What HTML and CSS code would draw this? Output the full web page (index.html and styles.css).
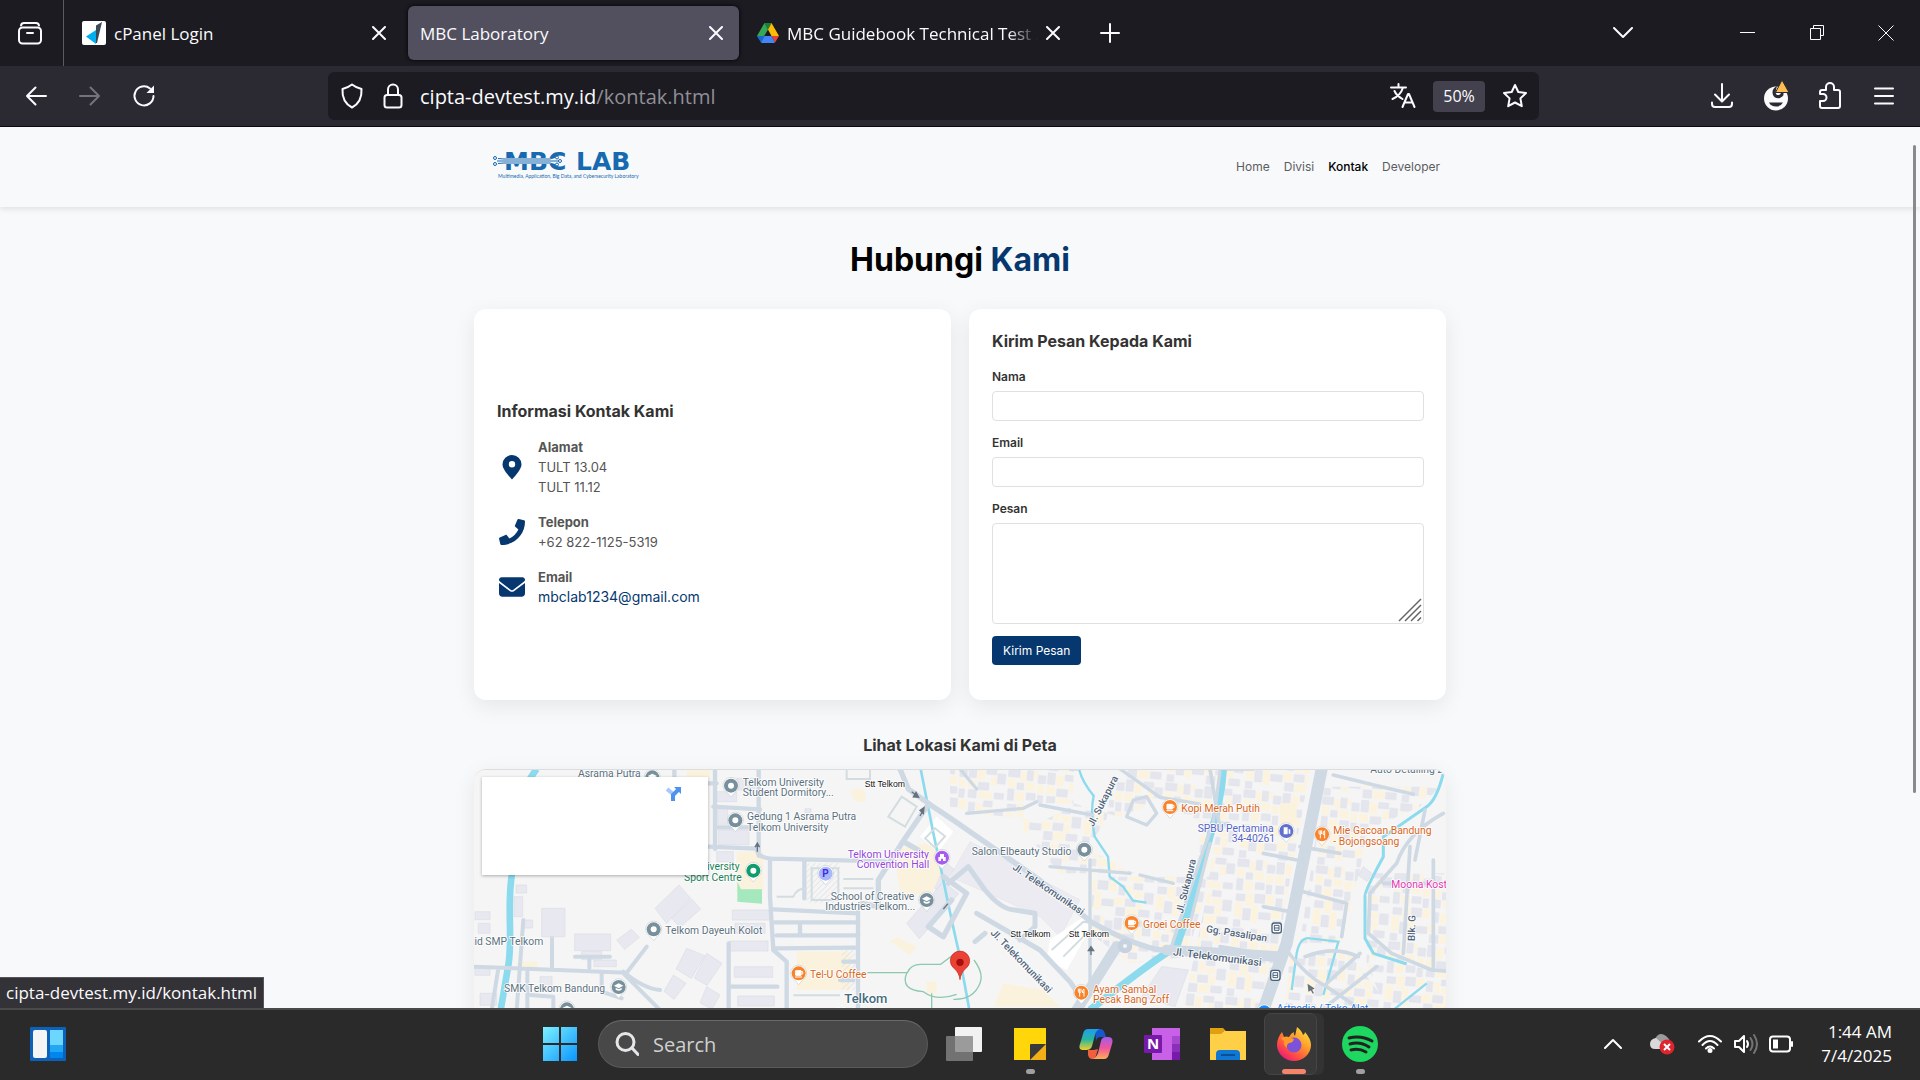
FILE: index.html
```html
<!DOCTYPE html>
<html lang="id">
<head>
<meta charset="utf-8">
<meta name="viewport" content="width=device-width, initial-scale=1">
<title>MBC Laboratory</title>
<link rel="stylesheet" href="styles.css">
</head>
<body>
<div class="desktop">

  <header class="tabbar">
    <button class="icon-btn tab-overview" aria-label="Recent browsing"><svg width="26" height="26" viewBox="0 0 26 26" class="line"><path d="M4 5.500q.5-2.500 3-2.500h12q2.500 0 3 2.500"/><rect x="2" y="7.500" width="22" height="16" rx="3.500"/><path d="M10 13h6"/></svg></button>
    <div class="tab">
      <svg width="24" height="24" viewBox="0 0 24 24"><rect width="24" height="24" rx="2" fill="#fff"/><path d="M4 15.500 14 9v14z" fill="#00aeef"/><path d="M14 4.500 20 1l-5 21h-1z" fill="#3b4a56"/></svg>
      <span class="tab-title">cPanel Login</span>
      <button class="icon-btn" aria-label="Close tab"><svg width="14" height="14" viewBox="0 0 14 14" class="line"><path d="m1 1 12 12M13 1 1 13"/></svg></button>
    </div>
    <div class="tab active">
      <span class="tab-title">MBC Laboratory</span>
      <button class="icon-btn" aria-label="Close tab"><svg width="14" height="14" viewBox="0 0 14 14" class="line"><path d="m1 1 12 12M13 1 1 13"/></svg></button>
    </div>
    <div class="tab">
      <svg width="22" height="20" viewBox="0 0 22 20"><path d="M7.500 0h7L11 6.500z" fill="#188038"/><path d="M7.500 0 11 6.500 4 18.500 0 13z" fill="#34a853"/><path d="M14.500 0 22 13h-7.500L11 6.500z" fill="#fbbc04"/><path d="M22 13h-7.500l3.500 6.500z" fill="#ea4335"/><path d="M0 13h7.500L4 19.500z" fill="#1967d2"/><path d="M7.500 13h7l3.500 6.500q-.5.500-1.500.500h-11q-1 0-1.500-.5z" fill="#4285f4"/></svg>
      <span class="tab-title faded">MBC Guidebook Technical Test 2025</span>
      <button class="icon-btn" aria-label="Close tab"><svg width="14" height="14" viewBox="0 0 14 14" class="line"><path d="m1 1 12 12M13 1 1 13"/></svg></button>
    </div>
    <button class="icon-btn new-tab" aria-label="New tab"><svg width="20" height="20" viewBox="0 0 20 20" class="line"><path d="M10 1v18M1 10h18"/></svg></button>
    <div class="window-controls">
      <button class="icon-btn list-tabs" aria-label="List all tabs"><svg width="20" height="12" viewBox="0 0 20 12" class="line"><path d="m1 1 9 9 9-9"/></svg></button>
      <button class="icon-btn" aria-label="Minimize"><svg width="16" height="16" viewBox="0 0 16 16" class="line thin"><path d="M0 7.500h15"/></svg></button>
      <button class="icon-btn" aria-label="Restore"><svg width="16" height="16" viewBox="0 0 16 16" class="line thin"><path d="M1.500 3.500h10v11h-10zM4.500 3.500v-3h10v10h-3"/></svg></button>
      <button class="icon-btn" aria-label="Close"><svg width="16" height="16" viewBox="0 0 16 16" class="line thin"><path d="m.5.500 15 15M15.500.5l-15 15"/></svg></button>
    </div>
  </header>

  <nav class="toolbar" aria-label="Browser">
    <div class="tools">
      <button class="icon-btn" aria-label="Back"><svg width="22" height="20" viewBox="0 0 22 20" class="line"><path d="M21 10H2M10.500 1.500 2 10l8.500 8.500"/></svg></button>
      <button class="icon-btn dim" aria-label="Forward"><svg width="22" height="20" viewBox="0 0 22 20" class="line"><path d="M1 10h19M11.500 1.500 20 10l-8.500 8.500"/></svg></button>
      <button class="icon-btn" aria-label="Reload"><svg width="24" height="24" viewBox="0 0 24 24" class="line"><path d="M21.500 12a9.500 9.500 0 1 1-3.500-7.500"/><path d="M22 1.500V9h-7.500z" fill="currentColor" stroke="none"/></svg></button>
    </div>
    <div class="urlbar">
      <svg width="24" height="26" viewBox="0 0 24 26" class="line"><path d="M12 1.500c3 2.500 6 3.500 9.500 4.500.5 8-2 14.500-9.500 18.500C4.500 20.500 2 14 2.500 6 6 5 9 4 12 1.500z"/></svg>
      <svg width="20" height="26" viewBox="0 0 20 26" class="line"><rect x="1.500" y="12" width="17" height="12.500" rx="2.500"/><path d="M5 12V6.500a5 5 0 0 1 10 0V12"/></svg>
      <span class="url">cipta-devtest.my.id<span class="url-path">/kontak.html</span></span>
      <button class="icon-btn" aria-label="Translate"><svg width="26" height="26" viewBox="0 0 26 26" class="line"><path d="M1 4.500h15M8.500 1v3.500M13 4.500C11.500 9.500 7 14 2.500 16M4.500 8c1.500 3.500 4.500 6 8 8"/><path d="m12.500 24 5.500-13h1l5.500 13M14.500 19.500h8"/></svg></button>
      <button class="zoom-level">50%</button>
      <button class="icon-btn" aria-label="Bookmark"><svg width="26" height="26" viewBox="0 0 26 26" class="line"><path d="m13 2 3.300 7 7.700 1-5.600 5.400 1.400 7.800L13 19.500l-6.800 3.700 1.400-7.800L2 10l7.700-1z"/></svg></button>
    </div>
    <div class="tools right">
      <button class="icon-btn" aria-label="Downloads"><svg width="24" height="26" viewBox="0 0 24 26" class="line"><path d="M12 1v17M5 11.500l7 7 7-7M2 19.500v1.500q0 3 3 3h14q3 0 3-3v-1.500"/></svg></button>
      <button class="icon-btn" aria-label="Account"><svg width="26" height="32" viewBox="0 0 26 32"><circle cx="13" cy="18.500" r="12" fill="#fbfbfe"/><path d="M14 6q-6 3-4 9 2 4 7 3 5-2 3-6h-2q0 3-3 3t-2-5z" fill="#2b2a33"/><path d="M6 22.500h14q-2 4-7 4t-7-4z" fill="#2b2a33"/><path d="m19 0 7 12.500H12.500z" fill="#ffbd4f" stroke="#2b2a33"/></svg></button>
      <button class="icon-btn" aria-label="Extensions"><svg width="24" height="28" viewBox="0 0 24 28" class="line"><path d="M8 8V5a4 4 0 0 1 8 0v3h4q2 0 2 2v14q0 2-2 2H4q-2 0-2-2v-5h3a3.500 3.500 0 0 0 0-7H2v-2q0-2 2-2z"/></svg></button>
      <button class="icon-btn" aria-label="Menu"><svg width="20" height="20" viewBox="0 0 20 20" class="line"><path d="M1 2.500h18M1 10h18M1 17.500h18"/></svg></button>
    </div>
  </nav>

  <div class="viewport">
    <div class="site-header">
      <div class="container nav">
        <svg class="logo" width="150" height="44" viewBox="0 0 150 44" role="img" aria-label="MBC LAB">
          <text x="12" y="26" class="logo-word">MBC</text>
          <text x="84" y="26" class="logo-word">LAB</text>
          <path d="M6 17h60" stroke="#f8f9fb" stroke-width="6"/>
          <path d="M5 17h62M6 14.500l6 .5h46l5-1.500M6 19.500l6-.5h46l5 1.500" stroke="#1769b0" fill="none"/>
          <g fill="#f8f9fb" stroke="#1769b0"><circle cx="3" cy="14" r="1.500"/><circle cx="3" cy="20" r="1.500"/><circle cx="65" cy="13.500" r="1.500"/><circle cx="68" cy="17" r="1.500"/><circle cx="65" cy="20.500" r="1.500"/></g>
          <text x="6" y="34" class="logo-tag">Multimedia, Application, Big Data, and Cybersecurity Laboratory</text>
        </svg>
        <div class="links">
          <a href="#">Home</a><a href="#">Divisi</a><a href="#" class="current">Kontak</a><a href="#">Developer</a>
        </div>
      </div>
    </div>

    <main class="container">
      <h1>Hubungi <span>Kami</span></h1>
      <div class="cards">
        <section class="card info">
          <h2>Informasi Kontak Kami</h2>
          <div class="item">
            <svg width="26" height="26" viewBox="0 0 26 26"><path fill-rule="evenodd" d="M13 1a9.500 9.500 0 0 0-9.500 9.500C3.500 15 9 21 13 25.500 17 21 22.500 15 22.500 10.500A9.500 9.500 0 0 0 13 1zm0 6a3.200 3.200 0 1 1 0 6.400A3.200 3.200 0 0 1 13 7z"/></svg>
            <div><strong>Alamat</strong><p>TULT 13.04</p><p>TULT 11.12</p></div>
          </div>
          <div class="item">
            <svg width="26" height="26" viewBox="0 0 512 512"><path d="M493 25 389 1c-11-3-23 3-27 14l-48 112c-4 10-1 21 7 28l61 50a371 371 0 0 1-177 177l-50-61c-7-8-18-11-28-7L15 362c-11 5-17 16-14 28l24 104c3 11 12 18 24 18 256 0 463-207 463-463 0-12-8-22-19-24z"/></svg>
            <div><strong>Telepon</strong><p>+62 822-1125-5319</p></div>
          </div>
          <div class="item">
            <svg width="26" height="26" viewBox="0 0 512 512"><path d="M48 64a48 48 0 0 0-29 86l218 164c11 8 27 8 38 0l218-164a48 48 0 0 0-29-86zM0 176v208c0 35 29 64 64 64h384c35 0 64-29 64-64V176L294 339c-22 17-54 17-76 0z"/></svg>
            <div><strong>Email</strong><p><a href="mailto:mbclab1234@gmail.com">mbclab1234@gmail.com</a></p></div>
          </div>
        </section>
        <form class="card">
          <h2>Kirim Pesan Kepada Kami</h2>
          <label for="nama">Nama</label>
          <input id="nama" type="text">
          <label for="email">Email</label>
          <input id="email" type="email">
          <label for="pesan">Pesan</label>
          <div class="area">
            <textarea id="pesan"></textarea>
            <svg class="grip" width="24" height="24" viewBox="0 0 24 24"><path d="M1 23 23 1M7 23 23 7M13 23 23 13M19.500 23l3.500-3.500"/></svg>
          </div>
          <button type="button" class="send">Kirim Pesan</button>
        </form>
      </div>
      <h2 class="map-title">Lihat Lokasi Kami di Peta</h2>
      <div class="map">
        <svg viewBox="42 150 2916 1014" preserveAspectRatio="xMidYMin slice" role="img" aria-label="Peta lokasi">
          <defs>
            <pattern id="dense" width="236" height="208" patternUnits="userSpaceOnUse" patternTransform="rotate(5)">
              <g fill="#e4e5ed" stroke="#d8dae4"><path d="M2 3h34v22H2zM58 2h18v30H58zM92 14h22v24H92zM30 42h20v20H30zM4 62h18v34H4zM60 70h27v20H60zM94 74h16v26H94zM120 4h22v34h-22zM172 6h30v18h-30zM206 20h24v30h-24zM150 50h32v22h-32zM122 74h24v24h-24zM200 78h28v18h-28zM6 108h26v20H6zM62 104h30v26H62zM30 150h22v34H30zM78 158h34v20H78zM4 186h20v20H4zM126 112h18v30h-18zM170 104h26v18h-26zM204 130h26v32h-26zM148 152h30v22h-30zM122 180h26v24h-26zM190 182h32v20h-32z"/></g>
              <g fill="#fcf3df"><path d="M39 7h16v30H39zM79 2h10v22H79zM3 31h22v26H3zM56 38h28v24H56zM28 68h26v28H28zM91 44h20v24H91zM146 8h22v34h-22zM186 30h17v26h-17zM118 44h26v24h-26zM152 78h42v20h-42zM36 104h22v38H36zM96 104h22v30H96zM4 134h22v44H4zM56 138h18v54H56zM150 112h16v34h-16zM172 128h26v20h-26zM114 150h28v24h-28zM182 154h18v24h-18zM152 180h34v24h-34z"/></g>
            </pattern>
            <pattern id="hatch" width="12" height="12" patternUnits="userSpaceOnUse" patternTransform="rotate(45)"><path d="M0 0v12" stroke="#d8d9de" stroke-width="3"/></pattern>
            <g id="pin"><path d="M0 34-12 20a24 24 0 1 1 24 0z" fill="#fff" stroke="#c9cdd2" stroke-width="2"/><circle r="21"/></g>
            <g id="cup" fill="none" stroke="#fff" stroke-width="3"><path d="M-9-8H7V6H-9z" fill="#fff"/><path d="M7-5h5v7H7M-11 11H10"/></g>
            <g id="fork" fill="none" stroke="#fff" stroke-width="3"><path d="M-9-12v8q0 4 4 4t4-4v-8M-5-12V12M8 12V-11q-5 2-5 11h5"/></g>
            <g id="cap" fill="#fff"><path d="M-14-4 0-11 14-4 0 4zM-9 2v6Q0 14 9 8V2L0 7z"/></g>
            <g id="bus"><rect x="-14" y="-15" width="28" height="30" rx="7" fill="#fff" stroke="#48617a" stroke-width="4"/><path d="M-7-8H7V7H-7zM-7 0H7" fill="none" stroke="#48617a" stroke-width="3"/></g>
          </defs>
          <rect x="42" y="147" width="2916" height="1020" fill="#f5f5f5"/>

          <g fill="url(#dense)">
            <path d="M1470 147h370v110l-90 45-280-30zM1840 250h-150v80l110 130h330l-20-130zM1960 147h330l-50 320-280-40-80-40 60-90zM1900 470h350l-70 240-170 20-120-90zM2300 147h250l-130 720h-250l60-290zM2590 200h350l-60 60-160 70-20 120-60 220h-120zM2720 460h240v460l-190-70-50-120zM2490 700h180l110 150 100 80v100h-420z"/>
          </g>
          <path d="M1965 300l130-60 130 70-20 160-150 0-80-30z" fill="#f5f5f5"/>
          <g fill="#e8e8f0" stroke="#dcdce6" stroke-width="2">
            <path d="m585 565 72-70 35 40-72 75zM635 595l60-58 27 30-62 55zM245 565h70v85h-70zM45 575h45v24H45zM55 610h35v30H55zM168 495h32v24h-32zM162 530h26v60h-26zM187 600h31v24h-31zM344 642h108v50H344zM402 720h67v20h-67zM365 694h60v25h-60zM470 660l44-32 24 24-44 36zM770 215h60v30h-60zM775 330h92v44h-92zM770 395h50v30h-50zM817 570h112v30H817zM825 610h90v30h-90zM808 663h116v30H808zM823 740h115v32H823zM833 828h110v30H833zM773 265h30v48h-30zM830 175h54v35h-54zM680 685l54 22-40 68-46-28zM740 700l46 30-45 66-38-22zM640 765l38 25-36 48-30-24zM740 800l40 25-24 42-36-18zM45 740h45v26H45zM60 820h50v36H60zM240 770h36v42h-36z"/>
            <path d="m1340 610 110-125 46 36-118 135zM1400 480l55-55 28 24-54 60z"/>
            <path d="m1470 470 60-105 330 175-60 110-60-60-110-50z" opacity=".7"/>
            <path d="m2045 830 60-90 80 10-40 110zM1035 266h18v12h-18zM2530 880h60v60h-60zM2710 440l25 20-14 24-26-18z"/>
          </g>
          <g fill="#fbf2de"><path d="M830 395h80v120h-80zM1010 695h160v115h-160zM1300 390l100-20 60 50-50 110-90-15zM1310 650l60 30-20 25-60-40zM1630 790l120 20 50 50H1600zM1170 215q24-20 46 0v30h-30zM680 147h70v30h-70zM185 725h48v18h-48zM1400 785h30v35h-30zM2460 250h50v60h-50z"/></g>
          <path d="M832 485v60l74 6v-43h-63z" fill="#a5e8bd"/>
          <path d="M1040 430h100v120h-100zM1145 690h40v120h-40z" fill="url(#hatch)"/>
          <g fill="#fff"><path d="m1380 350 50-60 50 45-45 60zM1770 660l100-70 30 20-80 140-60-30z"/></g>

          <g class="water">
            <path d="M230 147C150 250 168 330 156 460C140 560 158 640 146 730L122 870" stroke-width="20"/>
            <path d="M1382 147Q1400 240 1420 340L1450 480Q1470 580 1495 690L1530 880" stroke-width="8"/>
            <path d="M1857 147q10 40 44 80Q1890 280 1904 350l40 60 5 60 40 30 30 42 40 6" stroke-width="7"/>
            <path d="M2290 147Q2284 240 2250 350L2190 560 2150 680Q2080 720 1890 870" stroke-width="22"/>
            <path d="M2950 160q-20 80-50 100l-130 90 0 60q-60 110-55 120l0 125 25 45 100 32" stroke-width="9"/>
            <path d="M2495 810l15-110q10-50 40-45l85 10-45 160M2900 790l-100 80" stroke-width="7"/>
          </g>

          <g class="road">
            <path d="M42 740 500 758 560 680M490 755q60 50 110 55M490 760 600 870M115 745l-20 125M190 600l-20 270M276 655v88M388 715v30M425 755v60l60 20M202 755v110M345 710h105M210 825l70 5 0 40" stroke-width="12"/>
            <path d="M643 147v110M765 147v240M896 147v260M740 190h30M760 260l140 8M765 322h130M745 380l145 6q0 26 45 30l340 8M930 420v110l10 160 40 35v145M940 568l252 12M945 607h250M950 646h245M945 685l240-2M1020 607v40M1194 575v295M1033 425v110M806 670v200M812 800h140M1150 725h40M1140 780h40" stroke-width="13"/>
            <path d="M1320 147l25 60 70 50 60 40 260 180 160 130q110 60 190 80l75 12 40 0M1400 260l-75 110-70 110v80l-50-10M1330 365l45 25M1450 470l70 50-70 130-45-30 70-80" stroke-width="16"/>
            <path d="m1465 490 60-50 50 70q50 60 90 60l60 10 0 40-45 40M1550 580l190 110 90 95 30 45M1545 665l30-25" stroke-width="15"/>
            <path d="M1890 420v370M1830 147l20 0M1980 147l50 35 70 50 120 20M2020 240l-20 50 60 25 30-35-30-50zM1520 280l170-15 40-20M1740 255l155 30M1500 147l50 60M2040 465l100 25M2250 370l-60 240M2265 320l40-10M2130 695q30-100 130-390l20-150M1770 440l240 20" stroke-width="10"/>
            <path d="M2620 165q120 30 240 58M2510 510l150 40-15 100M2520 380l120 20M2410 400l100 20M2410 560l80 15M2950 280q-110 60-140 150l-80 90-5 120 70 60 120 50 60 5M2770 490l190 0M2850 380l-20 320M2895 270l-30 150M2480 690q60 80 120 110l90 60M2535 710q90-35 160 0M2600 790l100-90M2920 420v330M2610 850l140-110M2400 700l-120-20M2250 147l30 180M2380 147l-80 0" stroke-width="11"/>
            <path d="M2585 147 2480 670 2410 870" stroke-width="36"/>
            <path d="M2120 690l340 20M1970 680 1850 870" stroke-width="32"/>
          </g>
          <circle cx="1995" cy="678" r="14" fill="#f5f5f5" stroke="#c6d2df" stroke-width="16"/>
          <g fill="none" stroke="#d3dde0" stroke-width="6"><path d="M950 530h50q10-25 40-25M1055 445h80v95h-80zM1150 477h90M1150 505h90M1285 290l40-60 45 30-35 60zM1395 355l30-30 30 24-30 34zM1775 690l95-85q30 0 20 25l-80 80M1160 147v30h70v-30M1000 826h140"/></g>
          <g fill="none" stroke="#8cc9ae" stroke-width="4"><path d="M1222 758h120q10-25 40-25h60l40-30M1340 760q-20 50 50 55 40 30 100 8M1415 820v45M1542 720q30 40 18 70-20 50-80 48"/></g>
          <g class="arrow"><path d="M892 395v-20l-7 6 7-12 7 12-7-6M1355 215l18 14M1368 217l8 15-16-1zM1380 288l10-18M1392 263l-2 18-10-10zM1450 567l14-16M1893 705v-20M1893 680l-8 12h16zM2560 820l-10-18M2545 795l2 17 13-7z"/></g>

          <g class="place grey">
            <text x="354" y="170">Asrama Putra</text><text x="848" y="197">Telkom University</text><text x="848" y="228">Student Dormitory...</text>
            <text x="861" y="301">Gedung 1 Asrama Putra</text><text x="861" y="332">Telkom University</text>
            <text x="1112" y="539">School of Creative</text><text x="1096" y="570">Industries Telkom...</text>
            <text x="616" y="642">Telkom Dayeuh Kolot</text><text x="36" y="676">jid SMP Telkom</text><text x="132" y="815">SMK Telkom Bandung</text>
            <text x="1535" y="404">Salon Elbeauty Studio</text><text x="2731" y="160">Auto Detailing 2</text>
          </g>
          <g class="place green"><text x="704" y="451">University</text><text x="672" y="482">Sport Centre</text></g>
          <g class="place purple"><text x="1163" y="413">Telkom University</text><text x="1190" y="444">Convention Hall</text></g>
          <g class="place orange">
            <text x="1050" y="775">Tel-U Coffee</text><text x="2164" y="275">Kopi Merah Putih</text><text x="2049" y="625">Groei Coffee</text>
            <text x="1899" y="818">Ayam Sambal</text><text x="1899" y="849">Pecak Bang Zoff</text><text x="2620" y="343">Mie Gacoan Bandung</text><text x="2620" y="374">- Bojongsoang</text>
          </g>
          <g class="place indigo"><text x="2213" y="335">SPBU Pertamina</text><text x="2315" y="365">34-40261</text></g>
          <g class="place pink"><text x="2794" y="503">Moona Kost</text></g>
          <g class="place blue"><text x="2450" y="877">Artpedia / Toko Alat</text></g>
          <g class="place campus"><text x="1153" y="850">Telkom</text><text x="1130" y="891">University</text></g>
          <g class="stop"><text x="1214" y="200">Stt Telkom</text><text x="1651" y="651">Stt Telkom</text><text x="1826" y="651">Stt Telkom</text></g>
          <g class="street">
            <text transform="translate(1900 322) rotate(-63)">Jl. Sukapura</text><text transform="translate(2168 582) rotate(-76)">Jl. Sukapura</text>
            <text transform="translate(1656 446) rotate(34)">Jl. Telekomunikasi</text><text transform="translate(1590 640) rotate(46)">Jl. Telekomunikasi</text>
            <text transform="translate(2138 706) rotate(7)" class="major">Jl. Telekomunikasi</text><text transform="translate(2237 636) rotate(9)">Gg. Pasalipan</text>
            <text transform="translate(2864 664) rotate(-88)">Blk. G</text>
          </g>

          <g fill="#78909c">
            <use href="#pin" x="577" y="172"/><use href="#pin" x="813" y="197"/><use href="#pin" x="826" y="301"/><use href="#pin" x="1400" y="540"/><use href="#pin" x="581" y="628"/><use href="#pin" x="476" y="801"/><use href="#pin" x="321" y="868"/><use href="#pin" x="1873" y="389"/>
          </g>
          <g fill="#fff"><circle cx="813" cy="197" r="9"/><circle cx="826" cy="301" r="9"/><circle cx="581" cy="628" r="9"/><circle cx="1873" cy="389" r="9"/></g>
          <use href="#cap" x="577" y="172"/><use href="#cap" x="1400" y="540"/><use href="#cap" x="476" y="801"/><use href="#cap" x="321" y="868"/>
          <use href="#pin" x="880" y="452" fill="#0f9d6b"/><circle cx="880" cy="452" r="9" fill="#fff"/>
          <use href="#pin" x="1446" y="413" fill="#a65cf0"/><path d="M1435 423v-12h5v-9h12v9h5v12h-8v-7h-6v7z" fill="#fff"/>
          <use href="#pin" x="1097" y="461" fill="#a9b8fb"/><text x="1087" y="472" class="park">P</text>
          <g fill="#f9832a"><use href="#pin" x="1016" y="760"/><use href="#pin" x="2130" y="261"/><use href="#pin" x="2015" y="609"/><use href="#pin" x="1864" y="818"/><use href="#pin" x="2586" y="343"/></g>
          <use href="#cup" x="1016" y="760"/><use href="#cup" x="2130" y="261"/><use href="#cup" x="2015" y="609"/><use href="#fork" x="1864" y="818"/><use href="#fork" x="2586" y="343"/>
          <use href="#pin" x="2479" y="333" fill="#5f6fd0"/><path d="M2471 322h12v21h-12zM2486 326l5 3v12h-5" fill="#fff"/>
          <use href="#pin" x="2413" y="877" fill="#1a8cff"/>
          <use href="#bus" x="2450" y="624"/><use href="#bus" x="2446" y="766"/>
          <path d="M1500 779q-2-20-18-34a29 29 0 1 1 36 0q-16 14-18 34z" fill="#ea4335" stroke="#c5221f" stroke-width="2"/><circle cx="1500" cy="727" r="11" fill="#a50e0e"/>
        </svg>
        <div class="map-card"><svg width="16" height="16" viewBox="0 0 16 16"><path d="M1 3l6 5" stroke="#a8c7fa" stroke-width="4"/><path d="M7 15V9l6-6" fill="none" stroke="#4c93f0" stroke-width="4"/><path d="M8 1h7v7z" fill="#4c93f0"/></svg></div>
      </div>
    </main>
    <div class="scroll-thumb"></div>
    <div class="status">cipta-devtest.my.id/kontak.html</div>
  </div>

  <footer class="taskbar">
    <button class="icon-btn widgets" aria-label="Widgets"><svg width="36" height="34" viewBox="0 0 36 34"><rect width="36" height="34" rx="1" fill="#0b62b8"/><rect x="3" y="3" width="14" height="28" rx="2" fill="#f5f5f5"/><path d="M20 3h13v15H20z" fill="#6bd7ff"/><path d="M20 18h13v7H20z" fill="#22a7f5"/><path d="M20 25h13v6H20z" fill="#0086ef"/></svg></button>
    <div class="apps">
      <button class="icon-btn app" aria-label="Start"><svg width="36" height="36" viewBox="0 0 36 36"><defs><linearGradient id="win" x1="0" y1="0" x2="1" y2="1"><stop offset="0" stop-color="#7df0ff"/><stop offset="1" stop-color="#0a95ff"/></linearGradient></defs><path d="M1 1h16v16H1zM19 1h16v16H19zM1 19h16v16H1zM19 19h16v16H19z" fill="url(#win)"/></svg></button>
      <label class="search"><svg width="24" height="24" viewBox="0 0 24 24"><circle cx="10.500" cy="10" r="8.500"/><path d="m17 16 6 6.500"/></svg><input type="text" placeholder="Search" aria-label="Search"></label>
      <button class="icon-btn app" aria-label="Task view"><svg width="36" height="34" viewBox="0 0 36 34"><rect x="9" width="27" height="25" rx="1" fill="#f2f2f2"/><rect y="9" width="27" height="25" rx="1" fill="#858585" opacity=".8"/></svg></button>
      <button class="icon-btn app running" aria-label="Sticky Notes"><svg width="32" height="32" viewBox="0 0 32 32"><path d="M0 0h32v32H0z" fill="#ffd60a"/><path d="M16 16h16v16H16z" fill="#f2b016"/><path d="M16 32V17q0-1 1-1h15z" fill="#3a3a3a"/></svg></button>
      <button class="icon-btn app" aria-label="Copilot"><svg width="34" height="32" viewBox="0 0 34 32"><defs><linearGradient id="ca" x1="0" y1="0" x2="0" y2="1"><stop offset="0" stop-color="#1e9df2"/><stop offset=".5" stop-color="#28b79c"/><stop offset="1" stop-color="#f2cf2c"/></linearGradient><linearGradient id="cb" x1="0" y1="0" x2="0" y2="1"><stop offset="0" stop-color="#a05cf0"/><stop offset=".5" stop-color="#f0569b"/><stop offset="1" stop-color="#ffad57"/></linearGradient></defs><path d="M16 1h5q4 0 5 5l1 3h-6q-3 0-4 4z" fill="#1757d0"/><path d="M9 1h12q-4 1-5 6l-3 11q-1 4-6 4H4q-5 0-3-6L4 6q1-5 5-5z" fill="url(#ca)"/><path d="M9 22h6l4-1-3 10h-3q-3 0-4-4z" fill="#f0603e"/><path d="M25 31H14q3-1 5-6l3-12q1-4 5-4h2q6 0 4 7l-3 10q-1 5-5 5z" fill="url(#cb)"/></svg></button>
      <button class="icon-btn app" aria-label="OneNote"><svg width="36" height="32" viewBox="0 0 36 32"><path d="M8 0h28v32H8z" fill="#c961e8"/><path d="M28 8h8v8h-8z" fill="#a747cf"/><path d="M28 16h8v8h-8z" fill="#8a2fba"/><path d="M28 24h8v8h-8z" fill="#7719aa"/><rect y="7" width="18" height="18" rx="1" fill="#7719aa"/><text x="3" y="21" class="note-n">N</text></svg></button>
      <button class="icon-btn app" aria-label="File Explorer"><svg width="36" height="32" viewBox="0 0 36 32"><path d="M0 0h13l3 3h-2l-3 4H0z" fill="#e0a010"/><path d="M0 6h11l3-3h22v29H0z" fill="#ffcf48"/><path d="M6 32v-6q0-4 4-4h16q4 0 4 4v6z" fill="#0f78d4"/><path d="M11 27h14" stroke="#0a4f96" stroke-width="2"/></svg></button>
      <button class="icon-btn app current-app" aria-label="Firefox"><svg width="34" height="34" viewBox="0 0 34 34"><defs><linearGradient id="ff" x1="1" y1="0" x2=".2" y2="1"><stop offset="0" stop-color="#fff04a"/><stop offset=".4" stop-color="#ffa32b"/><stop offset=".75" stop-color="#ff4a44"/><stop offset="1" stop-color="#e31587"/></linearGradient></defs><path d="M20 0q5 4 6 8 2-1 2-3 6 7 6 13a17 16 0 0 1-34 0Q0 11 5 5l2 5 5 0q2-4 5-5-1 2 1 4z" fill="url(#ff)"/><circle cx="17" cy="18" r="7.500" fill="#7b52d8"/><path d="M4 11q6-3 10 0l3 1q-1 4-5 4-3 2-2 5-4-3-3-7z" fill="#ff9a29"/></svg></button>
      <button class="icon-btn app running" aria-label="Spotify"><svg width="36" height="36" viewBox="0 0 36 36"><circle cx="18" cy="18" r="18" fill="#1ed760"/><path d="M7 12q12-3 23 3M8 18q10-3 19 3M9 24q8-2 15 2" fill="none" stroke="#222" stroke-width="3" stroke-linecap="round"/></svg></button>
    </div>
    <div class="tray">
      <svg width="18" height="12" viewBox="0 0 18 12" class="line"><path d="m1 10 8-8 8 8"/></svg>
      <svg width="26" height="22" viewBox="0 0 26 22"><path d="M5 15a5 5 0 0 1 1-9q4-8 11-3 4 3 5 8l-6 5z" fill="#9b9b9b"/><path d="M1 11q0-5 6-6l8 7-2 4H6q-5 0-5-5z" fill="#d9d9d9"/><circle cx="18" cy="14" r="7.500" fill="#e0242e"/><path d="m15 11 6 6M21 11l-6 6" stroke="#fff" stroke-width="2"/></svg>
      <svg width="26" height="20" viewBox="0 0 26 20" class="line"><path d="M2 7.500q11-11 22 0M5.500 11q7.500-8 15 0M9 14.500q4-4 8 0"/><circle cx="13" cy="16.500" r="1.500" fill="#fff"/></svg>
      <svg width="26" height="22" viewBox="0 0 26 22" class="line"><path d="M2 8v6h4l5 5V3L6 8zM14 8q2 3 0 6"/><g opacity=".35"><path d="M17.500 5q4 6 0 12M21 2q6 9 0 18"/></g></svg>
      <svg width="26" height="18" viewBox="0 0 26 18" class="line"><rect x="1" y="1.500" width="20" height="15" rx="3"/><path d="M4 4.500h5v9H4z" fill="#fff" stroke="none"/><path d="M23 7v4"/></svg>
      <div class="clock"><span>1:44 AM</span><span>7/4/2025</span></div>
    </div>
  </footer>
</div>
</body>
</html>
```
FILE: styles.css
```css
* { box-sizing: border-box; }
body { margin: 0; font-family: "Open Sans", "Noto Sans", sans-serif; color: #333; }
h1, h2, p { margin: 0; }
a { text-decoration: none; }
svg { display: block; flex: none; }
button, input, textarea { font: inherit; }

.desktop { display: flex; flex-direction: column; height: 100vh; overflow: hidden; }
.icon-btn { display: flex; align-items: center; justify-content: center; padding: 0; border: 0; background: none; color: #fbfbfe; }
.line { fill: none; stroke: currentColor; stroke-width: 2; stroke-linecap: round; stroke-linejoin: round; }
.line.thin { stroke-width: 1; stroke-linecap: butt; stroke-linejoin: miter; }

/* Tab strip */
.tabbar { display: flex; flex: none; align-items: center; height: 66px; background: #1c1b22; color: #fbfbfe; }
.tab-overview { width: 64px; height: 66px; padding-right: 4px; border-right: 1px solid #5b5a62; }
.tab { display: flex; align-items: center; gap: 8px; flex: 0 1 338px; min-width: 0; height: 54px; margin-left: 6px; padding: 0 16px 0 12px; border-radius: 6px; font-size: 17px; }
.tab-overview + .tab { padding: 0 22px 0 12px; }
.tab.active { flex-basis: 331px; margin: 0; background: #52505e; box-shadow: 0 0 4px #000; }
.tab.active + .tab { flex-basis: 323px; padding: 0 8px 0 12px; }
.tab-title { flex: 1; min-width: 0; overflow: hidden; white-space: nowrap; }
.tab-title.faded { -webkit-mask-image: linear-gradient(90deg, #000 88%, transparent); mask-image: linear-gradient(90deg, #000 88%, transparent); }
.new-tab { width: 66px; height: 66px; margin-left: 9px; }
.window-controls { display: flex; margin-left: auto; }
.window-controls .icon-btn { width: 69px; height: 66px; }
.window-controls .list-tabs { width: 60px; margin-right: 60px; }

/* Navigation toolbar */
.toolbar { display: flex; flex: none; align-items: center; justify-content: space-between; height: 61px; background: #2b2a33; border-bottom: 1px solid #0c0c0d; color: #fbfbfe; }
.tools { display: flex; padding-left: 9px; flex: 1; }
.tools .icon-btn { width: 54px; height: 54px; }
.tools.right { justify-content: flex-end; padding: 0 9px 0 0; }
.dim { color: #74737b; }
.urlbar { display: flex; align-items: center; gap: 17px; flex: 0 1 1211px; height: 48px; padding: 0 11px 0 12px; border-radius: 6px; background: #1c1b22; }
.urlbar svg + svg { margin-left: 2px; }
.tools:first-child { flex: 0 1 328px; }
.url { flex: 1; font-size: 20px; white-space: nowrap; }
.url-path { color: #8f8f97; }
.zoom-level { height: 31px; width: 52px; padding: 0; border: 0; border-radius: 4px; background: #42414d; color: #fbfbfe; font-size: 16px; }

/* Web page */
.viewport { position: relative; flex: 1; min-height: 0; overflow: hidden; background: #f8f9fb; font-family: Inter, "Open Sans", sans-serif; }
.container { width: 100%; max-width: 972px; margin: 0 auto; }
.site-header { height: 80px; box-shadow: 0 2px 6px rgba(0, 0, 0, .1); }
.nav { display: flex; align-items: center; justify-content: space-between; height: 80px; padding: 0 6px 2px 18px; }
.logo-word { font: bold 25px "DejaVu Sans", sans-serif; fill: #1769b0; }
.logo-tag { font: 5px Lato, sans-serif; fill: #1769b0; }
.links { display: flex; gap: 14px; font-size: 12px; }
.links a { color: #5c5d5f; }
.links .current { color: #000; font-weight: 500; }
h1 { padding: 32px 0 28px; font-size: 32px; line-height: 42px; font-weight: 700; text-align: center; color: #000; }
h1 span { color: #06386f; }
h2 { font-size: 16px; line-height: 18px; font-weight: 700; color: #333; }
.cards { display: grid; grid-template-columns: 1fr 1fr; gap: 18px; }
.card { min-height: 391px; padding: 23px 22px 23px 23px; border-radius: 12px; background: #fff; box-shadow: 0 6px 22px rgba(0, 0, 0, .08); }
.info { display: flex; flex-direction: column; justify-content: center; gap: 15px; color: #555; font-size: 13px; line-height: 20px; }
.info h2 { margin-bottom: 2px; }
.item { display: flex; align-items: center; gap: 13px; padding-left: 2px; }
.item svg { fill: #06386f; }
.item a { color: #06386f; font-size: 14px; }
form label { display: block; margin: 18px 0 5px; font-size: 12px; line-height: 18px; font-weight: 600; }
form input, form textarea { display: block; width: 100%; height: 30px; margin: 0; padding: 4px 9px; border: 1px solid #dee0e4; border-radius: 4px; background: #fff; }
form input + label { margin-top: 13px; }
.area { position: relative; }
form textarea { height: 101px; resize: none; }
.grip { position: absolute; right: 2px; bottom: 2px; fill: none; stroke: #666; stroke-width: 1.5; }
.send { height: 29px; margin-top: 12px; padding: 0 11px; border: 0; border-radius: 4px; background: #06386f; color: #fff; font-size: 12px; }
.map-title { padding: 36px 0 15px; text-align: center; }
.map { position: relative; height: 338px; overflow: hidden; border-top: 1px solid #dcdde0; border-radius: 12px; box-shadow: 0 6px 22px rgba(0, 0, 0, .08); }
.map > svg { width: 100%; height: 338px; }
.map-card { position: absolute; left: 8px; top: 7px; display: flex; justify-content: flex-end; width: 226px; height: 98px; padding: 9px 26px; background: #fff; box-shadow: 0 1px 3px rgba(0, 0, 0, .3); }
.water { fill: none; stroke: #8bdaee; }
.road { fill: none; stroke: #ced9e4; stroke-linejoin: round; stroke-linecap: round; }
.arrow { fill: #66737f; stroke: #66737f; stroke-width: 4; }
.place, .street, .stop { font: 500 31px Roboto, sans-serif; paint-order: stroke; stroke: #fff; stroke-width: 5px; stroke-linejoin: round; }
.place { font-weight: 400; }
.grey { fill: #5b7180; }
.green { fill: #188058; }
.purple { fill: #9345dc; }
.orange { fill: #d9661c; }
.indigo { fill: #5363c7; }
.pink { fill: #e335b3; }
.blue { fill: #1a73e8; }
.campus { font-size: 39px; font-weight: 500; fill: #456b7d; }
.stop { font-family: "Liberation Sans", sans-serif; font-size: 26px; font-weight: 400; fill: #111; }
.street { font-size: 30px; fill: #50647a; }
.street .major { font-size: 32px; }
.park { font: 700 30px Roboto, sans-serif; fill: #3e2fd8; }
.scroll-thumb { position: absolute; right: 4px; top: 18px; width: 3px; height: 648px; border-radius: 2px; background: #8a8a8e; }
.status { position: absolute; left: 0; bottom: 0; height: 31px; padding: 0 6px; border: 1px solid #55555a; border-width: 1px 1px 0 0; background: #333237; color: #fbfbfe; font: 17px/29px "Open Sans", sans-serif; }

/* Taskbar */
.taskbar { display: grid; grid-template-columns: 1fr auto 1fr; flex: none; align-items: center; height: 72px; padding-bottom: 2px; border-top: 2px solid #4a4a4a; background: #2a2a2a; color: #fff; }
.widgets { justify-self: start; margin-left: 30px; }
.apps { display: flex; align-items: center; }
.app { position: relative; width: 66px; height: 62px; }
.search { display: flex; align-items: center; gap: 14px; width: 330px; height: 48px; margin: 0 3px 0 5px; padding: 0 16px; border: 1px solid #5a5a5a; border-top-color: #6a6a6a; border-radius: 24px; background: #484848; }
.search svg { fill: none; stroke: #e4e6e8; stroke-width: 3; stroke-linecap: round; }
.search input { width: 100%; min-width: 0; padding: 0; border: 0; background: none; font-size: 20px; color: #fff; }
.search input::placeholder { color: #d0d0d0; opacity: 1; }
.note-n { font: bold 15px "Open Sans", sans-serif; fill: #fff; }
.running::after, .current-app::after { content: ""; position: absolute; bottom: 1px; left: 50%; width: 9px; height: 5px; margin-left: -4px; border-radius: 3px; background: #a0a0a0; }
.current-app::before { content: ""; position: absolute; inset: 0 10px 0 3px; z-index: -1; border: 1px solid #454545; border-radius: 7px; background: #383838; box-shadow: 7px 0 0 #333; }
.current-app { z-index: 0; }
.current-app::after { width: 24px; margin-left: -12px; background: #f4846a; }
.tray { display: flex; align-items: center; justify-self: end; gap: 10px; margin-right: 28px; }
.tray svg:first-child { margin-right: 17px; }
.tray svg:nth-child(2) { margin-right: 12px; }
.clock { display: flex; flex-direction: column; align-items: flex-end; margin-left: 16px; font-size: 17px; line-height: 24px; }
```
